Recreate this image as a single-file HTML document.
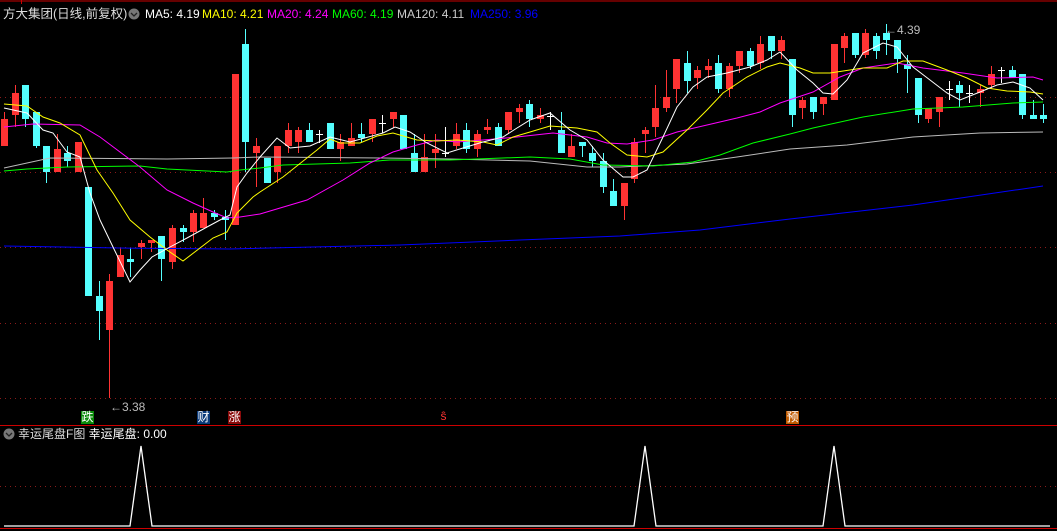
<!DOCTYPE html>
<html><head><meta charset="utf-8"><style>
html,body{margin:0;padding:0;background:#000;}
body{width:1057px;height:531px;overflow:hidden;position:relative;font-family:"Liberation Sans","Noto Sans CJK SC",sans-serif;}
svg{position:absolute;left:0;top:0;}
.t{position:absolute;font-size:12px;white-space:nowrap;line-height:14px;}
.tag{position:absolute;font-size:12px;line-height:13px;width:13px;height:13px;text-align:center;color:#fff;}
</style></head><body>
<svg id="s" width="1057" height="531" xmlns="http://www.w3.org/2000/svg">
<g stroke="#8b1a1a" stroke-width="1" stroke-dasharray="1,4">
<line x1="0" y1="97.5" x2="1057" y2="97.5"/><line x1="0" y1="172.5" x2="1057" y2="172.5"/>
<line x1="0" y1="247.5" x2="1057" y2="247.5"/><line x1="0" y1="323.5" x2="1057" y2="323.5"/>
<line x1="0" y1="398.5" x2="1057" y2="398.5"/><line x1="0" y1="486.5" x2="1057" y2="486.5"/>
</g>
<line x1="0" y1="1" x2="1057" y2="1" stroke="#c00" stroke-width="1"/>
<line x1="21.5" y1="0" x2="21.5" y2="4" stroke="#c00"/>
<line x1="0" y1="425.5" x2="1057" y2="425.5" stroke="#c00"/>
<line x1="0" y1="528.5" x2="1057" y2="528.5" stroke="#c00"/>
<g id="c"></g>
<g fill="none" stroke-width="1">
<polyline stroke="#0000ff" points="4,246 120,248 230,249 400,245 520,240 620,236 700,230 790,219 913,205 1043,186"/>
<polyline stroke="#bbbbbb" points="4,168 50,158 167,159 233,158 260,157 383,158 450,159 530,161 587,167 620,167 687,164 737,157 790,149 847,145 913,137 980,133 1043,132"/>
<polyline stroke="#00ff00" points="4,171 27,169 67,167 140,166 167,169 207,171 227,172 240,170 260,168 283,165 350,163 390,160 450,160 530,157 570,159 603,165 653,166 693,162 720,155 753,143 790,134 813,128 863,117 913,109 963,107 1013,103 1043,102"/>
<polyline stroke="#ff00ff" points="4,127 33,124 80,125 100,137 140,167 167,190 193,203 213,212 227,218 240,217 260,214 307,200 343,180 370,163 393,152 417,145 437,140 457,142 483,140 517,137 553,133 587,137 607,143 627,144 653,140 677,132 707,125 737,118 760,112 780,103 813,92 840,77 863,68 897,63 923,68 963,73 997,78 1033,77 1043,80"/>
<polyline stroke="#ffff00" points="4,104 27,106 43,117 60,123 80,135 97,170 113,193 130,220 150,237 167,250 183,261 200,248 213,238 227,232 237,213 253,197 260,192 283,177 317,150 330,139 340,143 360,143 377,136 393,133 417,140 437,141 457,140 483,142 497,145 513,137 530,132 550,126 577,128 597,132 610,143 627,155 647,157 663,152 687,130 707,110 723,93 747,77 767,67 780,63 800,68 813,73 830,73 863,68 887,68 903,61 923,61 947,70 967,78 987,88 1007,91 1030,92 1043,94"/>
<polyline stroke="#ffffff" points="4,108 27,113 43,130 53,133 67,152 80,157 90,193 100,220 113,247 130,282 140,270 152,257 170,247 187,238 207,227 220,220 230,215 237,187 247,173 260,157 277,138 290,148 310,146 330,137 350,142 383,133 395,127 410,132 427,143 447,153 463,148 483,142 503,137 517,128 530,120 550,113 570,130 587,140 603,160 623,177 633,177 647,170 663,137 677,107 693,87 707,77 727,73 750,67 767,60 780,52 797,70 813,83 823,93 833,94 847,80 863,53 883,43 897,47 913,67 930,80 947,93 960,100 980,92 997,85 1013,82 1030,88 1043,100"/>
</g>
<line x1="109.5" y1="330" x2="109.5" y2="398" stroke="#ff3333"/>
<polyline fill="none" stroke="#fff" stroke-width="1.3" points="4,526 130,526 141,446 152,526 634,526 645,446 656,526 823,526 834,446 845,526 1050,526"/>
<circle cx="134" cy="14" r="5.5" fill="#777"/><polyline points="131,13 134,16 137,13" fill="none" stroke="#222" stroke-width="1.3"/>
<circle cx="9" cy="434" r="5.5" fill="#777"/><polyline points="6,433 9,436 12,433" fill="none" stroke="#222" stroke-width="1.3"/>
</svg>
<div class="t" style="left:3px;top:7px;color:#ddd;font-size:12.5px;">方大集团(日线,前复权)</div>
<div class="t" style="left:145px;top:7px;color:#fff">MA5: 4.19</div>
<div class="t" style="left:202px;top:7px;color:#ff0">MA10: 4.21</div>
<div class="t" style="left:267px;top:7px;color:#f0f">MA20: 4.24</div>
<div class="t" style="left:332px;top:7px;color:#0f0">MA60: 4.19</div>
<div class="t" style="left:397px;top:7px;color:#ccc">MA120: 4.11</div>
<div class="t" style="left:470px;top:7px;color:#00f">MA250: 3.96</div>
<div class="t" style="left:18px;top:427px;color:#ddd;">幸运尾盘F图 <span style="color:#fff">幸运尾盘: 0.00</span></div>
<div class="t" style="left:110px;top:400px;color:#bbb;">←3.38</div>
<div class="t" style="left:885px;top:23px;color:#bbb;">←4.39</div>
<div class="tag" style="left:81px;top:411px;background:#0a8a0a;">跌</div>
<div class="tag" style="left:197px;top:411px;background:#0a3a7a;">财</div>
<div class="tag" style="left:228px;top:411px;background:#8a0a0a;">涨</div>
<div class="tag" style="left:437px;top:410px;color:#ff3333;">ŝ</div>
<div class="tag" style="left:786px;top:411px;background:#c05a00;">预</div>
<script>
var d=[[1,119,146,112,146,'r'],[12,93,115,85,127,'r'],[22,85,119,85,127,'c'],[33,112,146,112,148,'c'],[43,146,172,146,183,'c'],[54,149,172,134,172,'r'],[64,153,161,146,167,'c'],[75,142,172,142,172,'r'],[85,187,296,187,296,'c'],[96,296,311,281,340,'c'],[106,281,330,274,330,'r'],[117,255,277,248,277,'r'],[127,259,262,248,277,'c'],[138,243,247,240,259,'r'],[148,240,243,240,252,'r'],[158,236,259,236,281,'c'],[169,228,262,225,269,'r'],[180,228,232,225,242,'c'],[190,213,232,210,242,'r'],[200,213,228,198,228,'r'],[211,213,217,210,220,'c'],[222,217,220,210,240,'c'],[232,74,225,74,225,'r'],[242,44,142,29,172,'c'],[253,146,153,138,187,'r'],[264,158,183,158,183,'c'],[274,146,172,146,183,'r'],[285,130,146,123,153,'r'],[295,130,142,127,153,'r'],[306,130,142,123,142,'c'],[316,134,134,130,143,'w'],[327,123,149,123,149,'c'],[337,142,149,134,161,'r'],[348,138,146,123,146,'r'],[358,134,138,123,142,'c'],[369,119,134,119,142,'r'],[379,123,123,115,133,'w'],[390,112,119,112,128,'r'],[400,115,149,115,149,'c'],[411,153,172,134,172,'c'],[421,157,172,134,172,'r'],[432,149,153,134,168,'r'],[442,153,153,127,157,'w'],[453,134,146,123,149,'r'],[463,130,149,123,153,'c'],[474,134,149,130,157,'r'],[484,127,130,119,134,'r'],[495,127,146,123,146,'c'],[505,112,130,112,134,'r'],[516,108,112,104,123,'r'],[526,104,119,100,127,'c'],[537,115,119,108,123,'r'],[547,116,116,112,130,'w'],[558,130,153,112,153,'c'],[568,146,157,134,157,'r'],[579,142,146,142,157,'c'],[589,153,161,146,167,'c'],[600,161,187,153,193,'c'],[610,191,206,179,206,'c'],[621,183,206,183,220,'r'],[631,142,179,138,183,'r'],[642,130,134,127,153,'r'],[652,108,127,85,137,'r'],[663,97,108,70,112,'r'],[673,59,89,59,103,'r'],[684,63,81,51,93,'c'],[694,70,78,66,89,'r'],[705,66,70,59,78,'r'],[715,63,89,55,93,'c'],[726,66,89,63,97,'r'],[736,51,66,51,73,'r'],[747,51,66,48,69,'c'],[757,44,63,36,69,'r'],[768,36,51,36,59,'c'],[778,40,51,36,59,'r'],[789,59,115,59,127,'c'],[799,100,108,97,119,'r'],[810,97,112,97,119,'c'],[820,97,104,97,115,'r'],[831,44,100,44,100,'r'],[841,36,48,33,63,'r'],[852,33,55,33,58,'c'],[862,33,55,29,58,'r'],[873,36,51,33,59,'c'],[883,33,40,24,55,'c'],[894,40,59,40,73,'c'],[904,64,69,55,93,'c'],[915,78,115,78,123,'c'],[925,108,119,108,123,'r'],[936,97,112,97,127,'r'],[946,89,89,81,100,'w'],[956,85,93,81,107,'c'],[966,93,93,85,103,'w'],[977,89,93,85,107,'r'],[988,74,85,66,89,'r'],[998,70,70,67,83,'w'],[1009,70,78,66,78,'c'],[1019,74,115,74,119,'c'],[1030,115,119,100,119,'c'],[1040,115,119,104,123,'c']];
var h='';
d.forEach(function(a){var x=a[0],cx=x+3.5,col=a[5]=='r'?'#ff3333':a[5]=='c'?'#55ffff':'#ffffff';
h+='<line x1="'+cx+'" y1="'+a[3]+'" x2="'+cx+'" y2="'+a[4]+'" stroke="'+col+'"/>';
if(a[5]=='w'){h+='<line x1="'+x+'" y1="'+(a[1]+.5)+'" x2="'+(x+7)+'" y2="'+(a[1]+.5)+'" stroke="#fff"/>';}
else h+='<rect x="'+x+'" y="'+a[1]+'" width="7" height="'+Math.max(2,a[2]-a[1])+'" fill="'+col+'"/>';});
document.getElementById('c').innerHTML=h;
</script>
</body></html>
